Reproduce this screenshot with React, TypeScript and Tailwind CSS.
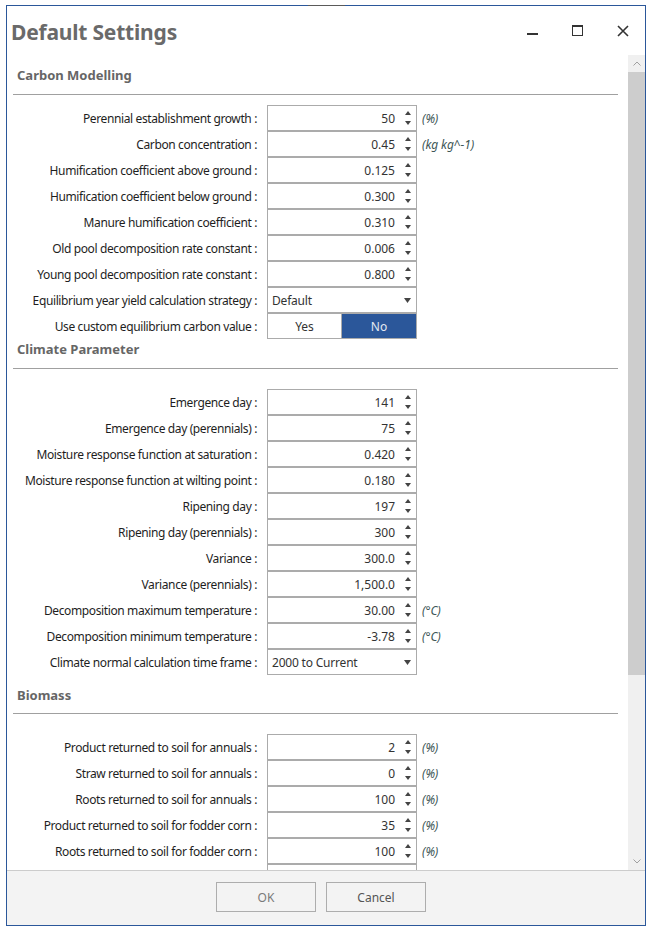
import React from 'react';

type Row =
  | { kind: 'num'; label: string; value: string; unit?: string }
  | { kind: 'select'; label: string; value: string }
  | { kind: 'toggle'; label: string };

const CARBON: Row[] = [
  { kind: 'num', label: 'Perennial establishment growth :', value: '50', unit: '(%)' },
  { kind: 'num', label: 'Carbon concentration :', value: '0.45', unit: '(kg kg^-1)' },
  { kind: 'num', label: 'Humification coefficient above ground :', value: '0.125' },
  { kind: 'num', label: 'Humification coefficient below ground :', value: '0.300' },
  { kind: 'num', label: 'Manure humification coefficient :', value: '0.310' },
  { kind: 'num', label: 'Old pool decomposition rate constant :', value: '0.006' },
  { kind: 'num', label: 'Young pool decomposition rate constant :', value: '0.800' },
  { kind: 'select', label: 'Equilibrium year yield calculation strategy :', value: 'Default' },
  { kind: 'toggle', label: 'Use custom equilibrium carbon value :' },
];

const CLIMATE: Row[] = [
  { kind: 'num', label: 'Emergence day :', value: '141' },
  { kind: 'num', label: 'Emergence day (perennials) :', value: '75' },
  { kind: 'num', label: 'Moisture response function at saturation :', value: '0.420' },
  { kind: 'num', label: 'Moisture response function at wilting point :', value: '0.180' },
  { kind: 'num', label: 'Ripening day :', value: '197' },
  { kind: 'num', label: 'Ripening day (perennials) :', value: '300' },
  { kind: 'num', label: 'Variance :', value: '300.0' },
  { kind: 'num', label: 'Variance (perennials) :', value: '1,500.0' },
  { kind: 'num', label: 'Decomposition maximum temperature :', value: '30.00', unit: '(°C)' },
  { kind: 'num', label: 'Decomposition minimum temperature :', value: '-3.78', unit: '(°C)' },
  { kind: 'select', label: 'Climate normal calculation time frame :', value: '2000 to Current' },
];

const BIOMASS: Row[] = [
  { kind: 'num', label: 'Product returned to soil for annuals :', value: '2', unit: '(%)' },
  { kind: 'num', label: 'Straw returned to soil for annuals :', value: '0', unit: '(%)' },
  { kind: 'num', label: 'Roots returned to soil for annuals :', value: '100', unit: '(%)' },
  { kind: 'num', label: 'Product returned to soil for fodder corn :', value: '35', unit: '(%)' },
  { kind: 'num', label: 'Roots returned to soil for fodder corn :', value: '100', unit: '(%)' },
  { kind: 'num', label: '', value: '' },
];

const Spinner = () => (
  <div className="flex flex-col items-center justify-center w-[17px] h-full gap-[6px]">
    <svg width="6" height="4" viewBox="0 0 6 4"><path d="M3 0 L6 4 L0 4 Z" fill="#444" /></svg>
    <svg width="6" height="4" viewBox="0 0 6 4"><path d="M0 0 L6 0 L3 4 Z" fill="#444" /></svg>
  </div>
);

const Field = ({ row }: { row: Row }) => {
  if (row.kind === 'toggle') {
    return (
      <div className="flex w-[150px] h-[26px] border border-[#ababab]">
        <div className="w-[74px] h-full flex items-center justify-center pt-[1px] bg-white text-[#333] border-r border-[#ababab]">Yes</div>
        <div className="flex-1 h-full flex items-center justify-center pt-[1px] bg-[#2b579a] text-[#e3e9f2]">No</div>
      </div>
    );
  }
  if (row.kind === 'select') {
    return (
      <div className="flex items-center w-[150px] h-[26px] border border-[#ababab] bg-white pl-[4px]">
        <span className="flex-1 pt-[1px] text-[#333] tracking-[-0.2px]">{row.value}</span>
        <div className="w-[17px] flex items-center justify-center">
          <svg width="7" height="5" viewBox="0 0 7 5"><path d="M0 0 L7 0 L3.5 5 Z" fill="#444" /></svg>
        </div>
      </div>
    );
  }
  return (
    <div className="flex items-center w-[150px] h-[26px] border border-[#ababab] bg-white">
      <span className="flex-1 text-right pr-[4px] pt-[1px] text-[#333]">{row.value}</span>
      <Spinner />
    </div>
  );
};

const Rows = ({ rows }: { rows: Row[] }) => (
  <div className="flex flex-col">
    {rows.map((row, i) => (
      <div key={i} className="flex items-center h-[26px]">
        <div className="w-[250px] pt-[1px] text-right text-[#1e1e1e] whitespace-nowrap tracking-[-0.38px]">{row.label}</div>
        <div className="ml-[10px]">
          <Field row={row} />
        </div>
        {row.kind === 'num' && row.unit && (
          <span className="ml-[5px] pt-[1px] italic text-[#3d5656] tracking-[-0.1px]">{row.unit}</span>
        )}
      </div>
    ))}
  </div>
);

const Heading = ({ title, top, gap }: { title: string; top: number; gap: number }) => (
  <div>
    <div
      className={`pl-[10px] h-[20px] leading-[20px] text-[13px] font-bold text-[#666] ${top === 10 ? 'mt-[10px]' : 'mt-0'}`}
    >
      {title}
    </div>
    <div className={`ml-[6px] w-[605px] h-px bg-[#a0a0a0] ${gap === 9 ? 'mt-[9px]' : 'mt-[8px]'}`} />
  </div>
);

export default function App() {
  return (
    <div
      className="w-[652px] h-[931px] bg-white pt-[5px] pl-[6px] text-[12px]"
      style={{ fontFamily: '"Noto Sans", "Open Sans", sans-serif' }}
    >
      <div className="relative w-[640px] h-[921px] border border-[#2b579a] flex flex-col bg-white">
        <div className="absolute -top-px left-[301px] w-[37px] h-px bg-[#5a5a5a]" />
        {/* title bar */}
        <div className="h-[49px] flex items-center pl-[4px] shrink-0">
          <div className="text-[21px] font-bold text-[#6a6a6a] tracking-[-0.2px] pt-[5px]">Default Settings</div>
          <div className="ml-auto flex items-center h-full pt-[1px]">
            <div className="w-[45px] flex justify-center">
              <svg width="12" height="12" viewBox="0 0 12 12"><rect x="0" y="8" width="11" height="2" fill="#333" /></svg>
            </div>
            <div className="w-[45px] flex justify-center">
              <svg width="12" height="12" viewBox="0 0 12 12">
                <rect x="0.5" y="0.5" width="10" height="10" fill="none" stroke="#333" />
                <rect x="0" y="0" width="11" height="2" fill="#333" />
              </svg>
            </div>
            <div className="w-[45px] flex justify-center">
              <svg width="12" height="12" viewBox="0 0 12 12">
                <path d="M1 1 L11 11 M11 1 L1 11" stroke="#333" strokeWidth="1.6" />
              </svg>
            </div>
          </div>
        </div>
        {/* body */}
        <div className="h-[815px] flex shrink-0">
          <div className="w-[621px] h-full overflow-hidden">
            <Heading title="Carbon Modelling" top={10} gap={9} />
            <div className="mt-[10px]">
              <Rows rows={CARBON} />
            </div>
            <Heading title="Climate Parameter" top={0} gap={9} />
            <div className="mt-[20px]">
              <Rows rows={CLIMATE} />
            </div>
            <Heading title="Biomass" top={10} gap={8} />
            <div className="mt-[20px]">
              <Rows rows={BIOMASS} />
            </div>
          </div>
          {/* scrollbar */}
          <div className="w-[17px] h-full bg-[#f0f0f0] flex flex-col">
            <div className="h-[17px] flex items-center justify-center">
              <svg width="8" height="5" viewBox="0 0 8 5"><path d="M0.5 4.5 L4 1 L7.5 4.5" fill="none" stroke="#a0a0a0" /></svg>
            </div>
            <div className="h-[603px] bg-[#cdcdcd]" />
            <div className="flex-1" />
            <div className="h-[17px] flex items-center justify-center">
              <svg width="8" height="5" viewBox="0 0 8 5"><path d="M0.5 0.5 L4 4 L7.5 0.5" fill="none" stroke="#a0a0a0" /></svg>
            </div>
          </div>
        </div>
        {/* footer */}
        <div className="flex-1 border-t border-[#cccccc] bg-[#f3f3f3] flex items-start pt-[11px] pl-[209px] gap-[10px]">
          <div className="w-[100px] h-[30px] border border-[#adadad] flex items-center justify-center pt-[1px] text-[#7a7a7a]">OK</div>
          <div className="w-[100px] h-[30px] border border-[#adadad] flex items-center justify-center pt-[1px] text-[#555]">Cancel</div>
        </div>
      </div>
    </div>
  );
}
